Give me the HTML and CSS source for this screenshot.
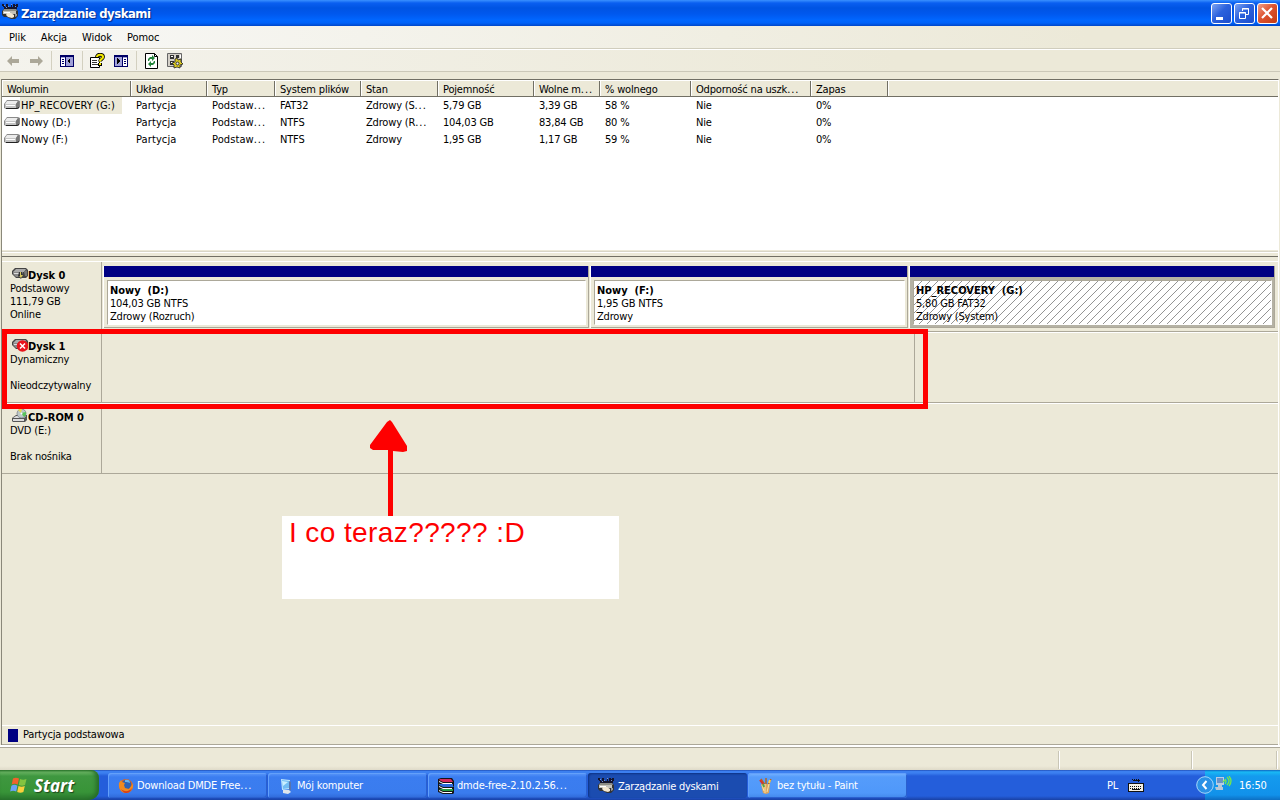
FILE: index.html
```html
<!DOCTYPE html>
<html lang="pl">
  <head>
    <meta charset="UTF-8" />
    <meta name="viewport" content="width=device-width, initial-scale=1.0" />
    <title>Zarządzanie dyskami</title>
    <link rel="stylesheet" href="styles.css">
  </head>
  <body>
    <!-- Shared icons -->
    <svg class="icon-defs" width="0" height="0">
      <symbol id="icon-drive" viewBox="0 0 16 10">
        <path d="M3 0h11l2 1v6l-2 2H2L0 8V4z" fill="#8a8a8a" />
        <path d="M3 1h11l-2 3H1z" fill="#ececec" />
        <path d="M1 4h11v4H1z" fill="#c4c4c4" />
        <path d="M2 5h9v1H2z" fill="#fff" />
        <path d="M12 4l2-3 1 1v5l-2 1h-1z" fill="#777" />
        <path d="M2 8h11l2-1v1l-2 1H2z" fill="#222" />
      </symbol>
      <symbol id="icon-disk" viewBox="0 0 16 12">
        <path d="M3 0h11l2 2v6l-2 2H4L0 6V3z" fill="#444" />
        <path d="M4 1h10l-2 3H1z" fill="#aaa" />
        <path d="M1 4h10v3l-1 2H4L1 6z" fill="#888" />
        <path d="M2 5h6v1H2z" fill="#ddd" />
        <path d="M12 4l2-2 1 1v5h-2z" fill="#777" />
        <path d="M7 4h3l1 3-2 4-3-3z" fill="#333" />
        <path d="M8 4h1v3h2L9 10l-2-2h1z" fill="#d8c860" />
      </symbol>
      <symbol id="icon-manage" viewBox="0 0 16 16">
        <path d="M0 0h2v2h1v1h1V0h2v2h1v1h2V1h1v2h1V0h2v1h1V0h2v3h-1v2H2V3H1V2H0z" fill="#14142c" />
        <path d="M2 1h1v1H2zM6 2h1v1H6zM9 0h1v1H9zM13 2h1v1h-1zM4 3h1v1H4z" fill="#7894d0" />
        <path d="M0 7l2-2h12l2 2v5l-3 3H9l-4-2H2l-2-2z" fill="#333" />
        <path d="M2 5h12l1 2H1z" fill="#8c8c84" />
        <path d="M1 7h13v3H1z" fill="#c4c2b8" />
        <path d="M2 8h6v1H2z" fill="#fff" />
        <path d="M5 9l4 0 3 2v2l-2 1-4-1-2-2z" fill="#f4e8d0" />
        <path d="M13 10h2v2l-2 1z" fill="#999" />
      </symbol>
    </svg>

    <div class="window">
      <div class="titlebar">
        <svg class="app-icon" width="16" height="16"><use href="#icon-manage" /></svg>
        <span class="title">Zarządzanie dyskami</span>
        <div class="window-buttons">
          <span class="win-btn"><svg width="21" height="21"><path d="M5 14h7v3H5z" fill="#fff" /></svg></span>
          <span class="win-btn"><svg width="21" height="21" fill="none" stroke="#fff"><path d="M8.500 8V5.500h6v6H12M8 6h7" /><path d="M5.500 9.500h6v6h-6zM5 10h7" /></svg></span>
          <span class="win-btn close"><svg width="21" height="21"><path d="M5 5l10 10M15 5L5 15" stroke="#fff" stroke-width="2.200" /></svg></span>
        </div>
      </div>

      <div class="menubar">
        <span>Plik</span>
        <span>Akcja</span>
        <span>Widok</span>
        <span>Pomoc</span>
      </div>

      <div class="toolbar">
        <svg class="arrow" width="13" height="10"><path d="M0 5l5-5v3h7v4H5v3z" fill="#aca899" /></svg>
        <svg class="arrow next" width="13" height="10"><path d="M13 5L8 0v3H0v4h8v3z" fill="#aca899" /></svg>
        <i class="sep"></i>
        <svg class="tool" width="14" height="12" shape-rendering="crispEdges">
          <path d="M0 0h14v12H0z" fill="#000066" />
          <path d="M1 2h12v9H1z" fill="#a0a0d8" />
          <path d="M1 3h4v8H1z" fill="#fff" />
          <path d="M2 4h2v1H2zM2 6h2v1H2zM2 8h2v1H2zM5 2h1v9H5z" fill="#000066" />
          <path d="M7 6l3-3v6z" fill="#000" />
        </svg>
        <i class="sep"></i>
        <svg class="tool help" width="15" height="15">
          <path d="M.5 4.500h9v10h-9z" fill="#fff" stroke="#000" />
          <path d="M2 7.500h5M2 9.500h5M2 11.500h6" stroke="#333" />
          <path d="M7 4c0-3 6-3 6 0 0 2-3 2-3 4.500" fill="none" stroke="#000" stroke-width="3.800" />
          <path d="M7 4c0-3 6-3 6 0 0 2-3 2-3 4.500" fill="none" stroke="#f4e900" stroke-width="2.200" />
          <path d="M8 10h4v3H8z" fill="#000" />
          <path d="M9 10h2v2H9z" fill="#f4e900" />
        </svg>
        <svg class="tool" width="14" height="12" shape-rendering="crispEdges">
          <path d="M0 0h14v12H0z" fill="#000066" />
          <path d="M1 2h12v9H1z" fill="#a0a0d8" />
          <path d="M9 3h4v8H9z" fill="#fff" />
          <path d="M10 4h2v1h-2zM10 6h2v1h-2zM10 8h2v1h-2zM8 2h1v9H8z" fill="#000066" />
          <path d="M6 6L3 3v6z" fill="#000" />
        </svg>
        <i class="sep"></i>
        <svg class="tool" width="13" height="16">
          <path d="M.5.5h9l3 3v12H.5z" fill="#fff" stroke="#000" />
          <path d="M9.500.5v3h3" fill="none" stroke="#000" />
          <path d="M3 8V6l2-2h2V2l3 3-3 3V6H5L4 8zM10 8v2l-2 2H6v2l-3-3 3-3v2h2l1-2z" fill="#23843a" />
        </svg>
        <svg class="tool" width="16" height="16">
          <path d="M.5.5h14v13H.5z" fill="#d4d0c8" stroke="#666" />
          <path d="M3 2h4v4H3zM9 2h3v3H9zM3 8h4v4H3z" fill="#333" />
          <path d="M4 3h2v1H4zM4 9h2v1H4zM13 2h1v3h-1z" fill="#fff" />
          <path d="M10 5l1 2 3-1v3l2 2-3 1v3l-3-1-3 1v-3l-2-2 3-1V6z" fill="#dccb22" stroke="#222" stroke-width=".8" />
          <circle cx="10.500" cy="10.500" r="1.500" fill="#eee" stroke="#333" />
        </svg>
      </div>

      <div class="client">
        <div class="volume-list">
          <div class="grid list-head">
            <span>Wolumin</span>
            <span>Układ</span>
            <span>Typ</span>
            <span>System plików</span>
            <span>Stan</span>
            <span>Pojemność</span>
            <span>Wolne m<em>...</em></span>
            <span>% wolnego</span>
            <span>Odporność na uszk<em>...</em></span>
            <span>Zapas</span>
            <span></span>
          </div>
          <div class="grid list-row">
            <span class="volume"><svg width="16" height="10"><use href="#icon-drive" /></svg><b class="selected">HP_RECOVERY (G:)</b></span>
            <span class="wide">Partycja</span>
            <span class="wide">Podstaw<em>...</em></span>
            <span>FAT32</span>
            <span>Zdrowy (S<em>...</em></span>
            <span>5,79 GB</span>
            <span>3,39 GB</span>
            <span>58 %</span>
            <span>Nie</span>
            <span>0%</span>
          </div>
          <div class="grid list-row">
            <span class="volume"><svg width="16" height="10"><use href="#icon-drive" /></svg><b>Nowy (D:)</b></span>
            <span class="wide">Partycja</span>
            <span class="wide">Podstaw<em>...</em></span>
            <span>NTFS</span>
            <span>Zdrowy (R<em>...</em></span>
            <span>104,03 GB</span>
            <span>83,84 GB</span>
            <span>80 %</span>
            <span>Nie</span>
            <span>0%</span>
          </div>
          <div class="grid list-row">
            <span class="volume"><svg width="16" height="10"><use href="#icon-drive" /></svg><b>Nowy (F:)</b></span>
            <span class="wide">Partycja</span>
            <span class="wide">Podstaw<em>...</em></span>
            <span>NTFS</span>
            <span>Zdrowy</span>
            <span>1,95 GB</span>
            <span>1,17 GB</span>
            <span>59 %</span>
            <span>Nie</span>
            <span>0%</span>
          </div>
        </div>

        <div class="splitter"></div>

        <div class="disks">
          <div class="disk">
            <div class="disk-label">
              <div class="disk-name"><svg width="16" height="12"><use href="#icon-disk" /></svg><strong>Dysk 0</strong></div>
              <p>Podstawowy</p>
              <p>111,79 GB</p>
              <p>Online</p>
            </div>
            <div class="partitions">
              <div class="partition part-d">
                <div class="part-bar"></div>
                <div class="part-body">
                  <strong>Nowy&nbsp; (D:)</strong>
                  <p>104,03 GB NTFS</p>
                  <p>Zdrowy (Rozruch)</p>
                </div>
              </div>
              <div class="partition part-f">
                <div class="part-bar"></div>
                <div class="part-body">
                  <strong>Nowy&nbsp; (F:)</strong>
                  <p>1,95 GB NTFS</p>
                  <p>Zdrowy</p>
                </div>
              </div>
              <div class="partition part-g">
                <div class="part-bar"></div>
                <div class="part-body">
                  <strong>HP_RECOVERY&nbsp; (G:)</strong>
                  <p>5,80 GB FAT32</p>
                  <p>Zdrowy (System)</p>
                </div>
              </div>
            </div>
          </div>

          <div class="disk">
            <div class="disk-label">
              <div class="disk-name">
                <svg width="16" height="14">
                  <use href="#icon-disk" width="16" height="12" />
                  <circle cx="10.500" cy="7" r="5.800" fill="#e8141c" />
                  <path d="M8 4.500l5 5M13 4.500l-5 5" stroke="#fff" stroke-width="1.500" />
                </svg>
                <strong>Dysk 1</strong>
              </div>
              <p>Dynamiczny</p>
              <p>&nbsp;</p>
              <p>Nieodczytywalny</p>
            </div>
            <div class="unreadable"></div>
          </div>

          <div class="disk">
            <div class="disk-label">
              <div class="disk-name">
                <svg class="cd" width="16" height="14">
                  <path d="M0 9l4-3h11v5l-2 2H1l-1-1z" fill="#555" />
                  <path d="M1 9l3-2h10l-2 2zM1 10h11v2H1z" fill="#ddd" />
                  <circle cx="9.500" cy="4.500" r="4.500" fill="#bcc8c8" stroke="#667" stroke-width=".6" />
                  <path d="M9 4L6 1a5 5 0 0 1 4-1z" fill="#eed94a" />
                  <path d="M9 4l5-1a5 5 0 0 1-2 5z" fill="#5bc45a" />
                  <circle cx="9.500" cy="4.500" r="1" fill="#fff" />
                </svg>
                <strong>CD-ROM 0</strong>
              </div>
              <p>DVD (E:)</p>
              <p>&nbsp;</p>
              <p>Brak nośnika</p>
            </div>
          </div>
        </div>

        <div class="legend">
          <i class="legend-color"></i>
          <span>Partycja podstawowa</span>
        </div>
      </div>

      <div class="statusbar">
        <span></span>
        <span></span>
        <span></span>
      </div>
    </div>

    <div class="taskbar">
      <div class="start">
        <svg width="18" height="18">
          <path d="M3 2.500c2-1.200 4-1 6 0L7.700 8.500c-2-1-4-1.200-6 0z" fill="#f0622d" />
          <path d="M10 3c2 1 4 1.100 6.500 0L15 9c-2 1-4 1-6.200 0z" fill="#84c440" />
          <path d="M1.400 9.700c2-1.200 4-1 6 0L6.200 15.500c-2-1-4-1.200-6 0z" fill="#6ba2f8" />
          <path d="M8.500 10c2 1 4 1.100 6.300 0l-1.400 6c-2 1.100-4 1-6.200 0z" fill="#fbd03c" />
        </svg>
        <span>Start</span>
      </div>
      <div class="tasks">
        <div class="task">
          <svg width="16" height="16">
            <circle cx="8" cy="8" r="7" fill="#e4641b" />
            <circle cx="8.500" cy="6.500" r="4.800" fill="#2d63b5" />
            <path d="M7 2c3-1 5 0 5 3-2-1-3-1-5-1z" fill="#6ab4ec" />
            <path d="M1 5l2-3 1 2 3 1-1 2 1 3 4 1 3-4 1-2c1 6-3 10-7 10S0 11 1 5z" fill="#f08a1f" />
            <path d="M3 11c3 3 8 3 11-1-1 4-4 5-6 5s-4-2-5-4z" fill="#d4401c" />
          </svg>
          <span>Download DMDE Free<em>...</em></span>
        </div>
        <div class="task">
          <svg width="16" height="16">
            <path d="M3 1l9 1v9l-8 1z" fill="#bfe6fc" />
            <path d="M4 2l7 1v7l-6 1z" fill="#72bdf3" />
            <path d="M4 3l6 1-5 4z" fill="#c9efff" />
            <path d="M11 3l2 1v8l-2 1z" fill="#5774ae" />
            <path d="M5 12h6l2 2-3 2-5-1z" fill="#dce5ec" />
          </svg>
          <span>Mój komputer</span>
        </div>
        <div class="task">
          <svg width="16" height="16">
            <path d="M0 1l3-1h11l2 3v12l-1 1H5l-5-2z" fill="#151515" />
            <path d="M2 1h11l2 3H5L1 2z" fill="#d52a5c" />
            <path d="M5 6h10v2l1 1H5L1 7V6z" fill="#2b69d8" />
            <path d="M5 11h10v2H5l-4-2z" fill="#26a044" />
            <path d="M1 3l4 2h9v1H5L1 4zM1 8l4 2h9v1H5L1 9zM1 12l4 2h9v1H5l-4-2z" fill="#fff" />
          </svg>
          <span>dmde-free-2.10.2.56<em>...</em></span>
        </div>
        <div class="task active">
          <svg width="16" height="16"><use href="#icon-manage" /></svg>
          <span>Zarządzanie dyskami</span>
        </div>
        <div class="task flash">
          <svg width="16" height="16">
            <path d="M3 1l4 6M8 0v7M13 1l-3 6" stroke="#b86422" stroke-width="1.500" />
            <path d="M2 2l3 4" stroke="#d7352b" stroke-width="2" />
            <path d="M11 5l1-3" stroke="#ffd44e" stroke-width="2" />
            <path d="M3 6h9l-1 9-3 1-3-1z" fill="#dca65f" />
            <path d="M4 7l2 6M7 6v9M11 6l-2 8" stroke="#f8e2a4" />
            <path d="M5 6l1 3" stroke="#57a347" stroke-width="2" />
          </svg>
          <span>bez tytułu - Paint</span>
        </div>
      </div>
      <div class="lang">
        <span>PL</span>
        <svg width="16" height="13" shape-rendering="crispEdges">
          <path d="M4 0h1v1h1V0h1v1h1V0h1v1h1V0h1v1h1v1h-1v1h-1V2H5V1H4z" fill="#111" />
          <path d="M0 4h16v9H0z" fill="#111" />
          <path d="M1 5h14v7H1z" fill="#f4f0e4" />
          <path d="M2 7.500h12M2 9.500h12" stroke="#111" stroke-width="1" stroke-dasharray="1 1" />
          <path d="M4 10h8v1H4z" fill="#111" />
        </svg>
      </div>
      <div class="tray">
        <svg class="tray-arrow" width="18" height="18">
          <circle cx="9" cy="9" r="8.300" fill="#2a91e6" stroke="#a6d8fa" />
          <path d="M10.500 5L7 9l3.500 4" fill="none" stroke="#fff" stroke-width="2" />
        </svg>
        <svg class="tray-net" width="17" height="15">
          <path d="M1 1h8v8H1z" fill="#b8cce4" />
          <path d="M2 2h6v5H2z" fill="#6a92c8" />
          <path d="M3 9h4v2H3zM0 11h8v3H1z" fill="#b8c7d6" />
          <path d="M8 6l2-2M10 3q2 2 0 5M12 1q4 4 0 8M14 0q4 5 0 10" fill="none" stroke="#77e74c" stroke-width="1.300" />
        </svg>
        <span>16:50</span>
      </div>
    </div>

    <!-- Marks drawn over the window -->
    <div class="mark-box"></div>
    <svg class="mark-arrow" width="38" height="97">
      <path d="M20 1l2 2 15 24v5l-4 1-10-1v65h-5V31H3L0 29v-3L17 3z" fill="#fe0000" />
    </svg>
    <div class="mark-note">I co teraz????? :D</div>
  </body>
</html>
```
FILE: styles.css
```css
/* Global Styles */
* {
  box-sizing: border-box;
}

body {
  margin: 0;
  width: 1280px;
  height: 800px;
  overflow: hidden;
  position: relative;
  display: flex;
  flex-direction: column;
  background: #ece9d8;
  color: #000;
  font-family: "DejaVu Sans Condensed", "DejaVu Sans", sans-serif;
  font-stretch: condensed;
  font-size: 11px;
  line-height: 13px;
  letter-spacing: -0.18px;
  white-space: nowrap;
}

p {
  margin: 0;
}

em {
  font-style: normal;
  letter-spacing: 0.9px;
}

svg {
  flex: none;
  display: block;
}

.icon-defs {
  display: none;
}

.window {
  height: 770px;
  display: flex;
  flex-direction: column;
}

/* Title bar */
.titlebar {
  height: 26px;
  padding: 0 2px;
  display: flex;
  align-items: center;
  background: linear-gradient(#3a91ff 0, #0a5ff0 3px, #0054e3 8px, #0058ee 14px, #0066ff 20px, #0062f8 23px, #0046c8 26px);
  color: #fff;
}

.app-icon {
  margin-bottom: 3px;
}

.title {
  margin-left: 3px;
  padding-top: 1px;
  font-size: 13px;
  font-weight: bold;
  letter-spacing: -0.5px;
  text-shadow: 1px 1px 1px #0a2a88;
}

.window-buttons {
  margin-left: auto;
  display: flex;
  gap: 2px;
}

.win-btn {
  width: 21px;
  height: 21px;
  border: 1px solid #fff;
  border-radius: 3px;
  background: linear-gradient(135deg, #7da4f2, #2c62dd 45%, #1c4dcc);
}

.win-btn svg {
  margin: -1px;
}

.win-btn.close {
  background: linear-gradient(135deg, #f0a08a, #de5430 45%, #c43c14);
}

/* Menu and toolbar */
.menubar {
  height: 23px;
  padding-left: 9px;
  display: flex;
  align-items: center;
  background: linear-gradient(90deg, #f8f8f6, #ece9d8 85%);
  border-bottom: 1px solid #d0cdbd;
  letter-spacing: -0.1px;
}

.menubar span {
  margin-right: 15px;
}

.toolbar {
  height: 23px;
  padding-left: 7px;
  display: flex;
  align-items: center;
  background: linear-gradient(90deg, #f4f3ed, #ece9d8 70%);
  border-top: 1px solid #fff;
  border-bottom: 1px solid #cbc8b8;
}

.arrow.next {
  margin-left: 10px;
}

.sep {
  width: 1px;
  height: 19px;
  margin: 0 7px 0 8px;
  background: #d3d0c0;
}

.sep + .tool {
  margin-left: 1px;
}

.sep + .tool.help {
  margin-left: 0;
}

.tool + .tool {
  margin-left: 9px;
}

/* Client area */
.client {
  height: 666px;
  margin: 7px 1px 0 1px;
  display: flex;
  flex-direction: column;
  border-left: 1px solid #8a887a;
  border-right: 1px solid #fff;
  border-top: 1px solid #716f64;
}

.volume-list {
  height: 170px;
  background: #fff;
}

.grid {
  display: grid;
  grid-template-columns: 129px 76px 68px 86px 77px 96px 66px 91px 120px 77px 1fr;
}

.list-head {
  height: 17px;
  background: #ece9d8;
  border-top: 1px solid #fff;
  border-bottom: 1px solid #716f64;
}

.list-head span {
  padding: 2px 0 0 4px;
  height: 15px;
  border-right: 1px solid #716f64;
  border-left: 1px solid #fff;
}

.list-head span:last-child {
  border-right: none;
}

.list-row {
  height: 17px;
  line-height: 18px;
}

.list-row span {
  padding-left: 5px;
}

.list-row .wide {
  letter-spacing: 0.1px;
}

.list-row .volume {
  display: flex;
  padding-left: 2px;
  letter-spacing: 0.05px;
}

.volume svg {
  margin-top: 3px;
}

.volume b {
  font-weight: normal;
  padding-left: 1px;
}

.volume .selected {
  width: 102px;
  height: 17px;
  background: #ece9d8;
}

.splitter {
  height: 7px;
  background: linear-gradient(#ece9d8 1px, #d9d6c7 1px 2px, #fff 2px 3px, #ece9d8 3px 6px, #716f64 6px);
}

/* Disks */
.disks {
  height: 468px;
  padding-top: 4px;
}

.disk {
  height: 71px;
  display: flex;
  border-top: 1px solid #fff;
  border-bottom: 1px solid #aca899;
}

.disk-label {
  width: 100px;
  padding: 7px 0 0 8px;
  border-right: 1px solid #aca899;
}

.disk-name {
  height: 13px;
  padding-left: 2px;
  display: flex;
}

.disk-name svg {
  margin-top: -1px;
}

.disk-name .cd {
  margin-top: -2px;
}

.disk strong,
.part-body strong {
  display: block;
  letter-spacing: 0;
}

.partitions {
  height: 66px;
  display: flex;
  gap: 2px;
  padding: 4px 0 0 2px;
}

.partition {
  height: 62px;
  border-right: 1px solid #aca899;
  border-bottom: 1px solid #aca899;
  box-shadow: -1px 0 #fff;
}

.part-d {
  width: 485px;
}

.part-f {
  width: 317px;
}

.part-g {
  width: 365px;
}

.part-bar {
  height: 11px;
  background: #000082;
}

.part-body {
  height: 45px;
  margin: 3px 2px 0 3px;
  padding: 3px 0 0 2px;
  border: 1px solid #aca899;
  border-right-color: #fff;
  border-bottom-color: #fff;
  background: #fff;
}

.part-g {
  background: #b5b2a4;
}

.part-g .part-body {
  background: repeating-linear-gradient(135deg, #fff 0 5px, #949494 5px 5.657px);
}

.unreadable {
  width: 813px;
  border-right: 1px solid #aca899;
}

.legend {
  height: 20px;
  padding: 0 0 2px 6px;
  display: flex;
  align-items: center;
  gap: 5px;
  border-top: 1px solid #fff;
  border-bottom: 1px solid #aca899;
}

.legend-color {
  width: 10px;
  height: 13px;
  margin-top: 2px;
  background: #000082;
}

/* Status bar */
.statusbar {
  height: 25px;
  padding: 5px 2px 1px 0;
  display: flex;
  border-top: 1px solid #fff;
  background: linear-gradient(#fff 1px, #aca899 1px 2px, #ece9d8 2px 20px, #dedac9);
}

.statusbar span {
  border-right: 1px solid #fff;
  box-shadow: inset -1px 0 #c9c6b6;
}

.statusbar span:nth-child(1) {
  width: 1060px;
}

.statusbar span:nth-child(2) {
  width: 133px;
}

.statusbar span:nth-child(3) {
  width: 85px;
}

/* Taskbar */
.taskbar {
  height: 30px;
  display: flex;
  color: #fff;
  background: linear-gradient(#1941a5 0, #3c80f0 1px, #3c80f0 3px, #245edb 6px, #245edb 26px, #1941a5 30px);
}

.start {
  width: 99px;
  height: 30px;
  padding: 0 0 0 10px;
  display: flex;
  align-items: center;
  gap: 6px;
  border-radius: 0 8px 10px 0;
  background: linear-gradient(#2d7a2c 0, #6cb865 2px, #3f9740 6px, #389438 22px, #28752c 30px);
  box-shadow: inset -3px 0 4px #276b28;
}

.start span {
  font-family: "Open Sans", "Noto Sans", sans-serif;
  font-size: 17px;
  font-weight: bold;
  font-style: italic;
  font-stretch: normal;
  letter-spacing: 0;
  text-shadow: 1px 1px 1px #1c471c;
}

.tasks {
  margin-left: 9px;
  display: flex;
  gap: 1px;
}

.task {
  width: 159px;
  height: 25px;
  margin-top: 3px;
  padding-left: 10px;
  display: flex;
  align-items: center;
  gap: 3px;
  border-radius: 3px;
  background: linear-gradient(#5a98fa, #3b7df0 4px, #3a7cee 20px, #2f69d8);
  box-shadow: inset 1px 1px #63a0fa, inset -1px -1px #2a60cf;
}

.task.active {
  background: #1b4cb0;
  box-shadow: inset 1px 1px 2px #0d3284;
  letter-spacing: -0.25px;
}

.task.active span {
  padding: 2px 0 0 1px;
}

.task.flash {
  background: linear-gradient(#79b4ff, #559cfb 4px, #4f98fa 20px, #4388ea);
}

.lang {
  margin-left: 200px;
  padding-top: 1px;
  display: flex;
  align-items: center;
  gap: 10px;
}

.tray {
  width: 75px;
  margin-left: auto;
  display: flex;
  align-items: center;
  background: linear-gradient(#1164c0 0, #19b9f5 2px, #149bee 6px, #1191ea 25px, #0d6fc2 30px);
}

.tray-arrow {
  margin-left: -9px;
}

.tray-net {
  margin: 0 7px 3px 1px;
}

/* Marks over the window */
.mark-box {
  position: absolute;
  left: 2px;
  top: 329px;
  width: 926px;
  height: 80px;
  border: 5px solid #fe0000;
}

.mark-arrow {
  position: absolute;
  left: 370px;
  top: 419px;
}

.mark-note {
  position: absolute;
  left: 282px;
  top: 516px;
  width: 337px;
  height: 83px;
  padding: 1px 0 0 7px;
  background: #fff;
  color: #fe0000;
  font-family: "Liberation Sans", Arial, sans-serif;
  font-stretch: normal;
  font-size: 28px;
  line-height: 32px;
  letter-spacing: 0.4px;
}
```
